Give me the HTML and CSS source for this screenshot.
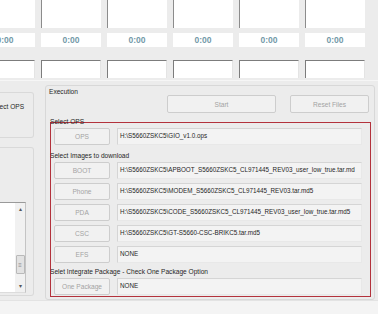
FILE: index.html
```html
<!DOCTYPE html>
<html lang="en">
<head>
    <meta charset="UTF-8">
    <meta name="viewport" content="width=device-width, initial-scale=1.0">
    <title>Odin Multi Downloader</title>
    <link rel="stylesheet" href="styles.css">
</head>
<body>
    <div class="ports">
        <div class="cells row-preview">
            <div class="cell"></div>
            <div class="cell"></div>
            <div class="cell"></div>
            <div class="cell"></div>
            <div class="cell"></div>
            <div class="cell"></div>
        </div>
        <div class="cells row-time">
            <div class="cell">0:00</div>
            <div class="cell">0:00</div>
            <div class="cell">0:00</div>
            <div class="cell">0:00</div>
            <div class="cell">0:00</div>
            <div class="cell">0:00</div>
        </div>
        <div class="cells row-status">
            <div class="cell"></div>
            <div class="cell"></div>
            <div class="cell"></div>
            <div class="cell"></div>
            <div class="cell"></div>
            <div class="cell"></div>
        </div>
    </div>

    <div class="main">
        <div class="options">
            <div class="opt-box">
                <span class="opt-text">Select OPS</span>
            </div>
            <div class="opt-box opt-log">
                <div class="listbox">
                    <div class="list-body"></div>
                    <div class="scrollbar">
                        <span class="arrow">&#9652;</span>
                        <span class="track"></span>
                        <span class="thumb">&#8801;</span>
                        <span class="arrow">&#9662;</span>
                    </div>
                </div>
            </div>
        </div>

        <div class="execution">
            <div class="exec-head">
                <span class="group-title">Execution</span>
                <button class="btn btn-start" disabled>Start</button>
                <button class="btn btn-reset" disabled>Reset Files</button>
            </div>

            <div class="files">
                <div class="label label-top">Select OPS</div>
                <div class="file-row">
                    <button class="btn file-btn" disabled>OPS</button>
                    <div class="path">H:\S5660ZSKC5\GIO_v1.0.ops</div>
                </div>

                <div class="label">Select Images to download</div>
                <div class="file-row">
                    <button class="btn file-btn" disabled>BOOT</button>
                    <div class="path">H:\S5660ZSKC5\APBOOT_S5660ZSKC5_CL971445_REV03_user_low_true.tar.md</div>
                </div>
                <div class="file-row">
                    <button class="btn file-btn" disabled>Phone</button>
                    <div class="path">H:\S5660ZSKC5\MODEM_S5660ZSKC5_CL971445_REV03.tar.md5</div>
                </div>
                <div class="file-row">
                    <button class="btn file-btn" disabled>PDA</button>
                    <div class="path">H:\S5660ZSKC5\CODE_S5660ZSKC5_CL971445_REV03_user_low_true.tar.md5</div>
                </div>
                <div class="file-row">
                    <button class="btn file-btn" disabled>CSC</button>
                    <div class="path">H:\S5660ZSKC5\GT-S5660-CSC-BRIKC5.tar.md5</div>
                </div>
                <div class="file-row">
                    <button class="btn file-btn" disabled>EFS</button>
                    <div class="path">NONE</div>
                </div>

                <div class="label label-pkg">Selet Integrate Package - Check One Package Option</div>
                <div class="file-row">
                    <button class="btn file-btn" disabled>One Package</button>
                    <div class="path">NONE</div>
                </div>
            </div>
        </div>
    </div>

    <div class="status-bar"></div>
</body>
</html>
```

FILE: styles.css
```css
* {
    box-sizing: border-box;
}
body {
    margin: 0;
    width: 378px;
    height: 314px;
    overflow: hidden;
    background-color: #ececec;
    font-family: "Liberation Sans", Arial, sans-serif;
    font-size: 6.6px;
    color: #262626;
}

/* port cells along the top */
.ports {
    height: 80px;
    overflow: hidden;
}
.cells {
    display: flex;
    gap: 6px;
    margin-left: -25px;
}
.cell {
    flex: none;
    width: 60px;
    background-color: #fff;
}
.row-preview {
    height: 28px;
}
.row-preview .cell {
    border-left: 1px solid #8c8c8c;
}
.row-time {
    margin-top: 5px;
    height: 14px;
}
.row-time .cell {
    line-height: 14px;
    text-align: center;
    font-size: 8.5px;
    font-weight: bold;
    color: #7399a8;
}
.row-status {
    margin-top: 13px;
    height: 18px;
}
.row-status .cell {
    border-top: 1px solid #7c7c7c;
    border-left: 1px solid #7c7c7c;
    border-right: 1px solid #e4e4e4;
}

.main {
    display: flex;
    height: 220px;
    border-top: 1px solid #f6f6f6;
}

/* left options column */
.options {
    flex: none;
    width: 34px;
    display: flex;
    flex-direction: column;
}
.opt-box {
    margin-top: 11px;
    height: 46px;
    border: 1px solid #d9d9d9;
    border-left: none;
    border-radius: 0 3px 3px 0;
    overflow: hidden;
    white-space: nowrap;
}
.opt-text {
    display: block;
    margin-left: -10px;
    padding-top: 10px;
}
.opt-log {
    margin-top: 9px;
    height: auto;
    flex: 1;
    margin-bottom: 4px;
    padding-top: 54px;
}
.listbox {
    display: flex;
    width: 26px;
    height: 91px;
    border-top: 1px solid #9a9a9a;
    border-right: 1px solid #c4c4c4;
    border-bottom: 1px solid #dcdcdc;
    background-color: #fff;
}
.list-body {
    flex: 1;
}
.scrollbar {
    width: 10px;
    display: flex;
    flex-direction: column;
    align-items: center;
    background-color: #f1f1f1;
    color: #555;
    font-size: 6px;
}
.arrow {
    height: 12px;
    line-height: 12px;
}
.track {
    height: 40px;
}
.thumb {
    width: 9px;
    height: 19px;
    line-height: 19px;
    text-align: center;
    background-color: #e2e2e2;
    border: 1px solid #b9b9b9;
    border-radius: 1px;
    color: #888;
}
.scrollbar .arrow:last-child {
    margin-top: auto;
}

/* execution group */
.execution {
    flex: none;
    width: 330px;
    margin-left: 11px;
    margin-top: 4px;
    border: 1px solid #d8d8d8;
    border-radius: 3px;
}
.exec-head {
    display: flex;
    align-items: flex-start;
    height: 27px;
}
.group-title {
    margin-left: 3px;
    padding-top: 2px;
}
.btn {
    font-family: "Liberation Sans", Arial, sans-serif;
    font-size: 6.6px;
    color: #a3a3a3;
    background-color: #f1f1f1;
    border: 1px solid #cdcdcd;
    border-radius: 2px;
    padding: 0;
}
.btn-start {
    margin-top: 9px;
    margin-left: auto;
    width: 109px;
    height: 18px;
}
.btn-reset {
    margin-top: 9px;
    margin-left: 14px;
    margin-right: 5px;
    width: 79px;
    height: 18px;
}

/* red file selection box */
.files {
    margin: 9px 3px 0 4px;
    height: 175px;
    border: 1px solid #b3323c;
}
.label {
    height: 10px;
    line-height: 10px;
    margin-top: 6px;
    margin-left: -1px;
    white-space: nowrap;
}
.label-top {
    margin-top: -6px;
}
.label-pkg {
    margin-top: 4px;
}
.file-row {
    display: flex;
    height: 17px;
    margin-top: 4px;
}
.label + .file-row {
    margin-top: 1px;
}
.file-btn {
    flex: none;
    width: 56px;
    margin-left: 3px;
}
.path {
    flex: 1;
    margin-left: 7px;
    margin-right: 8px;
    padding-left: 2px;
    line-height: 14px;
    font-size: 6.3px;
    white-space: nowrap;
    overflow: hidden;
    background-color: #f3f3f3;
    border: 1px solid #d5d5d5;
    border-bottom-color: #e8e8e8;
    border-right-color: #e8e8e8;
}

.status-bar {
    height: 14px;
    background-color: #f4f4f4;
    border-top: 1px solid #e3e3e3;
}
```
